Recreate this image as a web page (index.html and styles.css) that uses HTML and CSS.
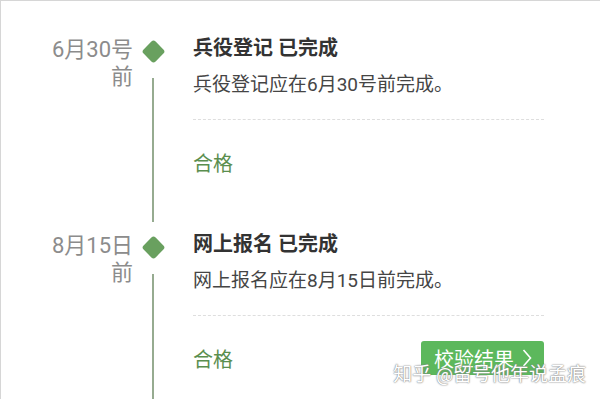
FILE: index.html
```html
<!DOCTYPE html>
<html>
<head>
  <meta charset="utf-8">
  <title>报名进度</title>
  <link rel="stylesheet" href="styles.css">
</head>
<body>
  <div class="page">
    <div class="item">
      <div class="date">6月30号前</div>
      <div class="marker">
        <div class="diamond"></div>
        <div class="line"></div>
      </div>
      <div class="content">
        <div class="title">兵役登记 已完成</div>
        <div class="desc">兵役登记应在6月30号前完成。</div>
        <div class="result">
          <span class="pass">合格</span>
        </div>
      </div>
    </div>
    <div class="item">
      <div class="date">8月15日前</div>
      <div class="marker">
        <div class="diamond"></div>
        <div class="line"></div>
      </div>
      <div class="content">
        <div class="title">网上报名 已完成</div>
        <div class="desc">网上报名应在8月15日前完成。</div>
        <div class="result">
          <span class="pass">合格</span>
          <button class="check">校验结果
            <svg width="10" height="20" viewBox="0 0 10 20"><polyline points="1.5,2 8.5,10 1.5,18" fill="none" stroke="#fff" stroke-width="1.6"/></svg>
          </button>
        </div>
      </div>
    </div>
    <div class="watermark">知乎 @留号他年说孟痕</div>
  </div>
</body>
</html>
```

FILE: styles.css
```css
body {
  margin: 0;
  font-family: Roboto, "Noto Sans CJK SC", sans-serif;
  background: #fff;
}
.page {
  position: relative;
  height: 399px;
  overflow: hidden;
  border-top: 1px solid #d6d6d6;
  border-left: 1px solid #d6d6d6;
  padding-top: 33px;
  box-sizing: border-box;
}
.item {
  display: grid;
  grid-template-columns: 132px 40px 1fr;
}
.date {
  justify-self: end;
  width: 90px;
  text-align: right;
  font-size: 22px;
  line-height: 27px;
  padding-top: 2px;
  color: #8c8c8c;
}
.marker {
  display: flex;
  flex-direction: column;
  align-items: center;
}
.diamond {
  width: 17px;
  height: 17px;
  margin-top: 9px;
  background: #69a05f;
  border-radius: 3px;
  transform: rotate(45deg);
}
.line {
  flex: 1;
  width: 2px;
  margin-top: 18px;
  margin-bottom: 8px;
  background: #96ab90;
}
.item:last-of-type .line {
  margin-bottom: 0;
}
.content {
  margin-left: 20px;
  margin-right: 56px;
  padding-bottom: 51px;
}
.title {
  font-size: 20px;
  line-height: 28px;
  font-weight: bold;
  color: #333;
}
.desc {
  font-size: 19px;
  line-height: 28px;
  margin-top: 9px;
  padding-bottom: 20px;
  border-bottom: 1px dashed #dedede;
  color: #454545;
}
.result {
  display: flex;
  justify-content: space-between;
  align-items: center;
  height: 34px;
  margin-top: 25px;
}
.pass {
  font-size: 20px;
  color: #5a8e4e;
}
.check {
  display: flex;
  align-items: center;
  gap: 8px;
  width: 123px;
  height: 34px;
  padding: 0 0 0 13px;
  border: none;
  border-radius: 3px;
  background: #5cb85c;
  color: #fff;
  font-family: inherit;
  font-size: 20px;
}
.watermark {
  position: absolute;
  right: 14px;
  bottom: 13px;
  font-size: 19px;
  color: #fff;
  text-shadow: 0 0 1px #777, 0 0 2px #888;
}
```
